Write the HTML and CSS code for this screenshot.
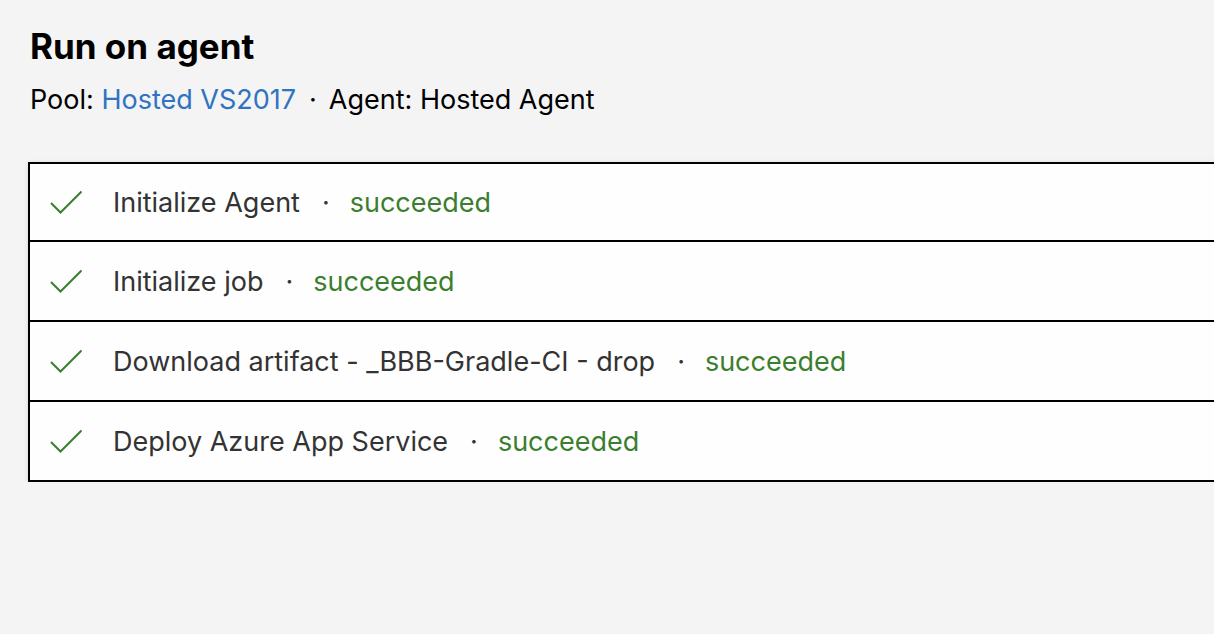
FILE: index.html
```html
<!DOCTYPE html>
<html>
<head>
<meta charset="utf-8">
<link rel="stylesheet" href="styles.css">
</head>
<body>
<div class="page">
  <h1 class="title">Run on agent</h1>
  <p class="meta">Pool: <a class="link" href="#">Hosted VS2017</a><span class="sep">·</span>Agent: Hosted Agent</p>
  <div class="steps">
    <div class="step">
      <svg class="check" viewBox="0 0 32 24" width="32" height="24"><path d="M1 13 L10.5 22.5 L31.5 1.5" fill="none" stroke="#3b7e2f" stroke-width="2"/></svg>
      <span class="name">Initialize Agent</span><span class="dot">·</span><span class="status">succeeded</span>
    </div>
    <div class="step">
      <svg class="check" viewBox="0 0 32 24" width="32" height="24"><path d="M1 13 L10.5 22.5 L31.5 1.5" fill="none" stroke="#3b7e2f" stroke-width="2"/></svg>
      <span class="name">Initialize job</span><span class="dot">·</span><span class="status">succeeded</span>
    </div>
    <div class="step">
      <svg class="check" viewBox="0 0 32 24" width="32" height="24"><path d="M1 13 L10.5 22.5 L31.5 1.5" fill="none" stroke="#3b7e2f" stroke-width="2"/></svg>
      <span class="name">Download artifact - _BBB-Gradle-CI - drop</span><span class="dot">·</span><span class="status">succeeded</span>
    </div>
    <div class="step">
      <svg class="check" viewBox="0 0 32 24" width="32" height="24"><path d="M1 13 L10.5 22.5 L31.5 1.5" fill="none" stroke="#3b7e2f" stroke-width="2"/></svg>
      <span class="name">Deploy Azure App Service</span><span class="dot">·</span><span class="status">succeeded</span>
    </div>
  </div>
</div>
</body>
</html>
```
FILE: styles.css
```css
html, body {
  margin: 0;
  padding: 0;
  background: #f4f4f4;
  overflow: hidden;
}
body {
  font-family: Inter, "Noto Sans", sans-serif;
  color: #000;
}
.page {
  padding: 25px 0 0 30px;
}
.title {
  margin: 0;
  font-size: 35px;
  font-weight: 700;
  line-height: 42px;
}
.meta {
  margin: 17px 0 0;
  font-size: 27px;
  line-height: 32px;
}
.link {
  color: #2f73c2;
  text-decoration: none;
}
.sep {
  margin: 0 12px 0 13px;
}
.steps {
  margin: 46px 0 0 -2px;
  width: 1240px;
  background: #fefefe;
  border: 2px solid #000;
  box-shadow: 0 1px 5px rgba(0, 0, 0, 0.12);
}
.step {
  display: flex;
  align-items: center;
  height: 78px;
  padding-left: 20px;
  border-top: 2px solid #000;
  font-size: 27px;
  color: #333;
}
.step:first-child {
  border-top: none;
  height: 76px;
}
.check {
  flex: none;
  margin-right: 31px;
}
.dot {
  margin: 0 20px 0 22px;
  color: #333;
}
.status {
  color: #3b7e2f;
}
```
